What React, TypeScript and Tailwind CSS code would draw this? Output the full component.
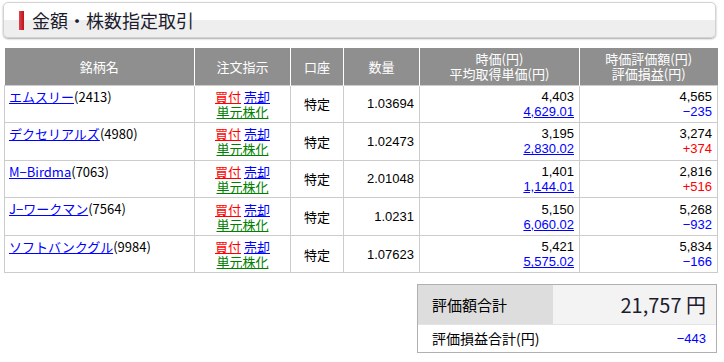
import React from 'react';

type Row = {
  name: string;
  code: string;
  qty: string;
  price: string;
  avg: string;
  value: string;
  pl: string;
  up: boolean;
};

const rows: Row[] = [
  { name: 'エムスリー', code: '2413', qty: '1.03694', price: '4,403', avg: '4,629.01', value: '4,565', pl: '−235', up: false },
  { name: 'デクセリアルズ', code: '4980', qty: '1.02473', price: '3,195', avg: '2,830.02', value: '3,274', pl: '+374', up: true },
  { name: 'M−Birdma', code: '7063', qty: '2.01048', price: '1,401', avg: '1,144.01', value: '2,816', pl: '+516', up: true },
  { name: 'J−ワークマン', code: '7564', qty: '1.0231', price: '5,150', avg: '6,060.02', value: '5,268', pl: '−932', up: false },
  { name: 'ソフトバンクグル', code: '9984', qty: '1.07623', price: '5,421', avg: '5,575.02', value: '5,834', pl: '−166', up: false },
];

const font = { fontFamily: '"Noto Sans CJK JP", "Liberation Sans", sans-serif' };
const num = { fontFamily: '"Liberation Sans", "Noto Sans CJK JP", sans-serif' };

export default function App() {
  return (
    <div className="w-[724px] h-[362px] bg-white text-[13px] leading-[15px] text-black overflow-hidden" style={font}>
      {/* タイトル */}
      <div className="mx-[3px] mt-[2px] h-[36px] flex items-center rounded-[5px] border border-[#d2d2d2] bg-[linear-gradient(#ffffff_50%,#eeeeee_50%)] shadow-[0_1px_2px_rgba(0,0,0,0.35)] w-[713px]">
        <span className="ml-[15px] w-[5px] h-[19px] bg-[linear-gradient(90deg,#e0444a,#b8141c)]" />
        <h1 className="ml-[8px] text-[18px] leading-[22px] text-[#1c1c2e]">金額・株数指定取引</h1>
      </div>

      {/* 一覧 */}
      <table className="mt-[10px] ml-[4px] w-[713px] border-collapse table-fixed">
        <colgroup>
          <col className="w-[190px]" />
          <col className="w-[96px]" />
          <col className="w-[53px]" />
          <col className="w-[76px]" />
          <col className="w-[160px]" />
          <col className="w-[138px]" />
        </colgroup>
        <thead>
          <tr className="h-[37px] bg-[#8f8f8f] text-white">
            <th className="font-normal border-r border-white">銘柄名</th>
            <th className="font-normal border-r border-white">注文指示</th>
            <th className="font-normal border-r border-white">口座</th>
            <th className="font-normal border-r border-white">数量</th>
            <th className="font-normal border-r border-white leading-[15px]">時価(円)<br />平均取得単価(円)</th>
            <th className="font-normal leading-[15px]">時価評価額(円)<br />評価損益(円)</th>
          </tr>
        </thead>
        <tbody>
          {rows.map((r) => (
            <tr key={r.code} className="h-[37.6px]">
              <td className="border border-[#cccccc] align-top pl-[4px] pt-[3px]">
                <a className="text-[#0000ff] underline">{r.name}</a>({r.code})
              </td>
              <td className="border border-[#cccccc] text-center">
                <div>
                  <a className="text-[#ff0000] underline">買付</a>{' '}
                  <a className="text-[#0000ff] underline">売却</a>
                </div>
                <div>
                  <a className="text-[#008000] underline">単元株化</a>
                </div>
              </td>
              <td className="border border-[#cccccc] text-center">特定</td>
              <td className="border border-[#cccccc] text-right pr-[5px]" style={num}>{r.qty}</td>
              <td className="border border-[#cccccc] text-right pr-[5px]" style={num}>
                <div>{r.price}</div>
                <div><a className="text-[#0000ff] underline">{r.avg}</a></div>
              </td>
              <td className="border border-[#cccccc] text-right pr-[5px]" style={num}>
                <div>{r.value}</div>
                <div className={r.up ? 'text-[#ff0000]' : 'text-[#0000ff]'}>{r.pl}</div>
              </td>
            </tr>
          ))}
        </tbody>
      </table>

      {/* 合計 */}
      <div className="flex justify-end mt-[11px] mr-[7px]">
        <div className="w-[300px] border border-[#b0b0b0]">
          <div className="flex h-[39px]">
            <div className="w-[135px] bg-[#dddddd] flex items-center pl-[14px] text-[15px]">評価額合計</div>
            <div className="flex-1 bg-[#f3f3f3] flex items-center justify-end pr-[10px] text-[20px] leading-[24px] text-[#1c1c2e]">21,757 円</div>
          </div>
          <div className="flex h-[28px] items-center justify-between px-[14px] pr-[10px] border-t border-[#e4e4e4]">
            <span className="text-[14px]">評価損益合計(円)</span>
            <span className="text-[#0000ff]" style={num}>−443</span>
          </div>
        </div>
      </div>
    </div>
  );
}
